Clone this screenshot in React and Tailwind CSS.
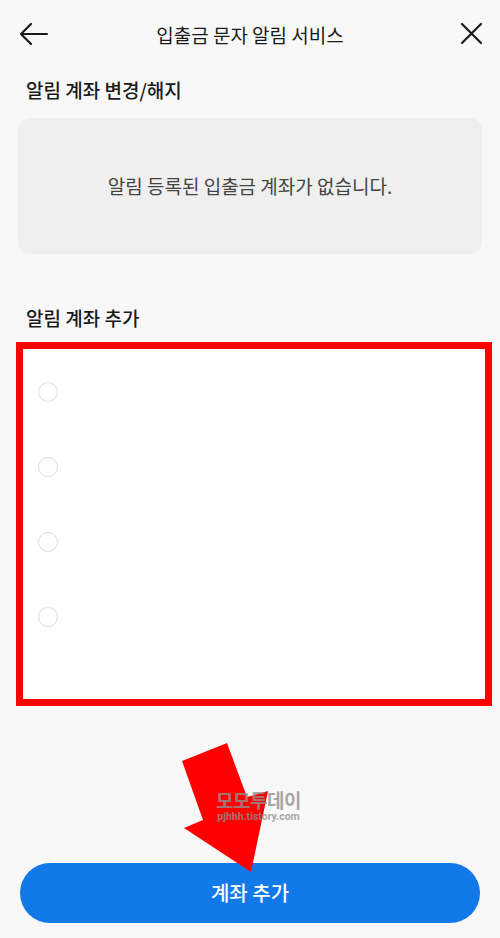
import React from 'react';

const slots = [0, 1, 2, 3];

export default function App() {
    return (
        <div className="relative w-[500px] h-[938px] bg-[#f8f8f8] flex flex-col font-['Noto_Sans_CJK_KR','Noto_Sans',sans-serif] text-[#1a1a1a] overflow-hidden">
            {/* header */}
            <div className="relative h-[70px] flex items-center justify-center shrink-0">
                <button className="absolute left-[19px] top-[22px]">
                    <svg width="30" height="24" viewBox="0 0 30 24" fill="none" stroke="#1a1a1a" strokeWidth="2.2" strokeLinecap="round" strokeLinejoin="round">
                        <path d="M2 12 H28 M12 2 L2 12 L12 22" />
                    </svg>
                </button>
                <h1 className="text-[19px] leading-[26px]">입출금 문자 알림 서비스</h1>
                <button className="absolute left-[459px] top-[21px]">
                    <svg width="24" height="24" viewBox="0 0 24 24" fill="none" stroke="#1a1a1a" strokeWidth="2.2" strokeLinecap="round">
                        <path d="M3 3 L22 22 M22 3 L3 22" />
                    </svg>
                </button>
            </div>

            <div className="px-[18px]">
                <h2 className="mt-[7px] pl-[8px] text-[19px] leading-[26px] font-medium">알림 계좌 변경/해지</h2>
                <div className="mt-[15px] h-[136px] rounded-[12px] bg-[#efefef] flex items-center justify-center">
                    <p className="text-[19px] leading-[26px] text-[#444]">알림 등록된 입출금 계좌가 없습니다.</p>
                </div>
                <h2 className="mt-[51px] pl-[8px] text-[19px] leading-[26px] font-medium">알림 계좌 추가</h2>
            </div>

            {/* account list (highlighted) */}
            <div className="mt-[11px] ml-[16px] mr-[8px] h-[364px] border-[7px] border-[#ff0000] bg-white pt-[33px] pl-[15px] flex flex-col gap-[55px] shrink-0">
                {slots.map(i => (
                    <span key={i} className="w-[20px] h-[20px] rounded-full border border-[#dcdcdc] bg-white" />
                ))}
            </div>

            <div className="flex-1" />

            <button className="mx-[20px] mb-[15px] h-[60px] rounded-full bg-[#1279e9] text-white text-[20px] font-medium shrink-0">
                계좌 추가
            </button>

            {/* annotation arrow */}
            <svg className="absolute left-0 top-0 pointer-events-none" width="500" height="938" viewBox="0 0 500 938">
                <polygon points="182,761 227,743 247,797 268,791 251,872 184,828 203,820" fill="#ff0000" />
            </svg>

            {/* watermark */}
            <div className="absolute left-[216px] top-[790px] flex flex-col items-center pointer-events-none text-[#909090]/80">
                <span className="text-[19px] leading-[20px] font-bold tracking-[-0.5px]">모모투데이</span>
                <span className="mt-[1px] text-[10.5px] leading-[11px] font-bold font-['Roboto',sans-serif]">pjhhh.tistory.com</span>
            </div>
        </div>
    );
}
